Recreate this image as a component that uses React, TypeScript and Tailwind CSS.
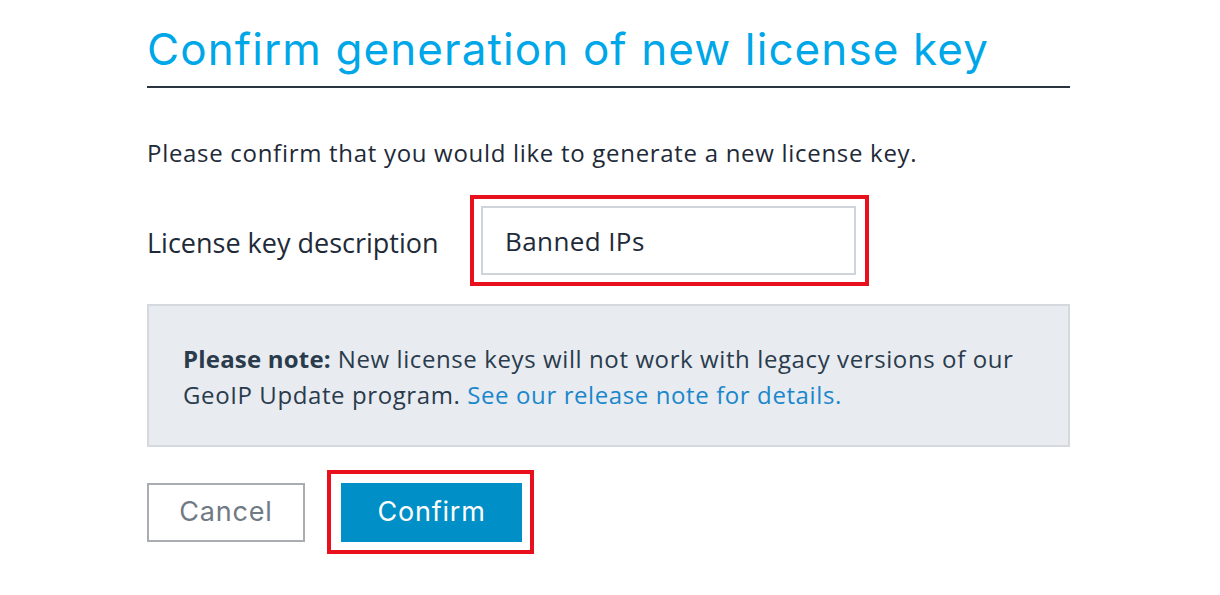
const body = { fontFamily: '"Open Sans", "Noto Sans", sans-serif' };
const display = { fontFamily: 'Inter, "DejaVu Sans", sans-serif' };

export default function App() {
  return (
    <div className="min-h-[595px] bg-white text-[#1e2a38]">
      <div className="ml-[147px] w-[923px] pt-[22px]">
        {/* Title */}
        <h1 style={display} className="text-[44px] leading-[54px] text-[#00a7e8] font-normal tracking-[1.1px]">
          Confirm generation of new license key
        </h1>
        <div className="mt-[10px] h-[2px] bg-[#2b3542]" />

        <p style={body} className="mt-[48px] text-[24px] leading-[34px] tracking-[0.7px]">
          Please confirm that you would like to generate a new license key.
        </p>

        {/* Description field */}
        <div className="mt-[25px] flex items-center">
          <label style={body} className="w-[323px] pt-[5px] text-[27px] leading-[36px]">
            License key description
          </label>
          <div className="border-4 border-[#e8101c] pt-[7px] pb-[7px] pl-[7px] pr-[9px]">
            <input
              style={body}
              defaultValue="Banned IPs"
              className="block w-[375px] h-[69px] border-2 border-[#cfd4da] px-[22px] text-[26px] tracking-[0.4px] text-[#1e2a38] outline-none"
            />
          </div>
        </div>

        {/* Note */}
        <div style={body} className="mt-[18px] h-[143px] border-2 border-[#d4d9e0] bg-[#e8ebf0] px-[34px] pt-[35px] text-[24px] leading-[36px] tracking-[0.6px] text-[#2a3b4c]">
          <strong className="font-bold tracking-[0.2px]">Please note:</strong> New license keys will not work with legacy versions of our GeoIP Update program.{" "}
          <a href="#" className="text-[#1a87cc]">See our release note for details.</a>
        </div>

        {/* Actions */}
        <div className="mt-[23px] flex items-center gap-[22px]">
          <button style={display} className="w-[158px] h-[59px] border-2 border-[#a9adb1] text-[27px] tracking-[0.8px] text-[#707a84]">
            Cancel
          </button>
          <div className="border-4 border-[#e8101c] pt-[9px] pb-[8px] pl-[10px] pr-[8px]">
            <button style={display} className="block w-[181px] h-[59px] bg-[#008fc6] text-[27px] tracking-[0.8px] text-white">
              Confirm
            </button>
          </div>
        </div>
      </div>
    </div>
  );
}
